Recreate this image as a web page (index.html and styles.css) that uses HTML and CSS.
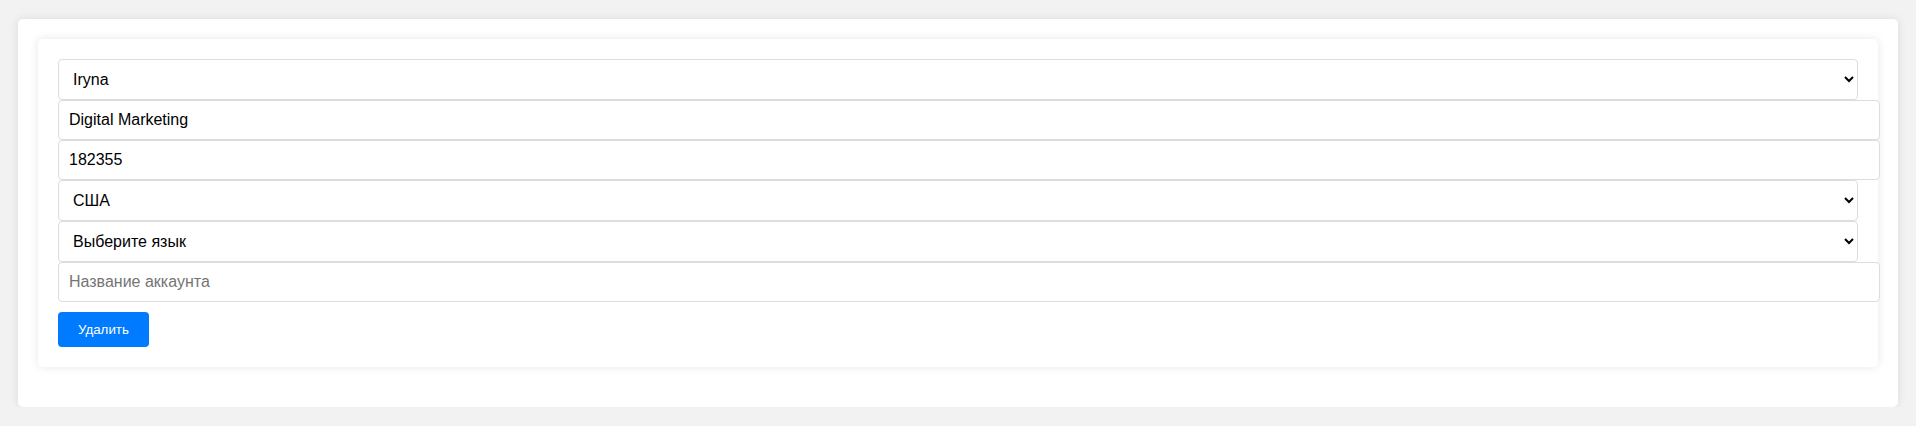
FILE: index.html
```html
<!DOCTYPE html>
<html lang="ru">
<head>
<meta charset="utf-8">
<title>Аккаунт</title>
<link rel="stylesheet" href="styles.css">
</head>
<body>
<div class="container">
  <div class="card">
    <select class="field">
      <option>Iryna</option>
    </select>
    <input class="field text" type="text" value="Digital Marketing">
    <input class="field text" type="text" value="182355">
    <select class="field">
      <option>США</option>
    </select>
    <select class="field">
      <option>Выберите язык</option>
    </select>
    <input class="field text" type="text" placeholder="Название аккаунта">
    <button class="btn" type="button">Удалить</button>
  </div>
</div>
</body>
</html>
```
FILE: styles.css
```css
html, body {
  margin: 0;
  padding: 0;
}
body {
  background: #f2f2f2;
  font-family: "Liberation Sans", Arial, sans-serif;
  padding: 19px 18px 0 18px;
}
.container {
  background: #ffffff;
  border-radius: 5px;
  box-shadow: 0 0 10px rgba(0, 0, 0, 0.1);
  padding: 20px 20px 40px 20px;
}
.card {
  background: #ffffff;
  border-radius: 5px;
  box-shadow: 0 0 10px rgba(0, 0, 0, 0.1);
  padding: 20px;
}
.field {
  display: block;
  width: 100%;
  margin: 0;
  padding: 10px;
  font-family: "Liberation Sans", Arial, sans-serif;
  font-size: 16px;
  color: #000;
  background: #fff;
  border: 1px solid #dddddd;
  border-radius: 4px;
  outline: none;
}
.text {
  box-sizing: content-box;
}
.text::placeholder {
  color: #757575;
}
.btn {
  display: block;
  margin-top: 10px;
  padding: 10px 20px;
  background: #007bff;
  color: #ffffff;
  border: none;
  border-radius: 4px;
  font-family: "Liberation Sans", Arial, sans-serif;
  font-size: 13.333px;
  cursor: pointer;
}
```
